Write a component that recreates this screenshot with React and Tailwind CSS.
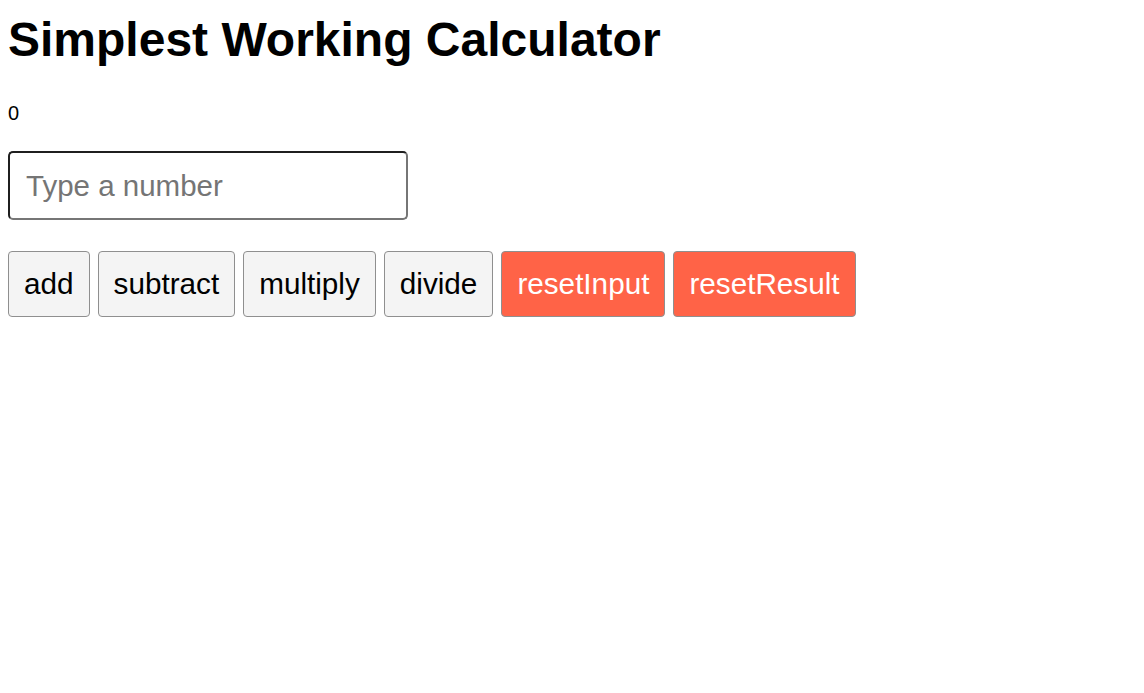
import { useState } from "react";

const grayBtn =
  "rounded border border-[#8f8f8f] bg-[#f4f4f4] px-[15px] py-[15px] text-[29.7px] leading-[normal] text-black";
const redBtn =
  "rounded border border-[#8f8f8f] bg-[#ff6347] px-[15px] py-[15px] text-[29.7px] leading-[normal] text-white";

export default function App() {
  const [value, setValue] = useState("");
  const [result, setResult] = useState(0);

  const num = () => Number(value) || 0;

  return (
    <div className="min-h-screen bg-white p-2 font-['Liberation_Sans',Arial,sans-serif] text-black">
      <h1 className="mt-[4px] text-[48px] font-bold leading-[55px]">Simplest Working Calculator</h1>
      <div className="mt-[35px] text-[20px] leading-[23px]">{result}</div>

      <div className="mt-[26px]">
        <input
          type="number"
          value={value}
          onChange={(e) => setValue(e.target.value)}
          placeholder="Type a number"
          className="w-[400px] rounded-[5px] border-2 border-t-[#1f1f1f] border-l-[#1f1f1f] border-r-[#767676] border-b-[#767676] bg-white px-4 py-[15.5px] text-[29.5px] leading-[normal] text-black outline-none placeholder:text-[#757575]"
        />
      </div>

      <div className="mt-[31px] flex gap-2">
        <button className={grayBtn} onClick={() => setResult((r) => r + num())}>add</button>
        <button className={grayBtn} onClick={() => setResult((r) => r - num())}>subtract</button>
        <button className={grayBtn} onClick={() => setResult((r) => r * num())}>multiply</button>
        <button className={grayBtn} onClick={() => setResult((r) => r / num())}>divide</button>
        <button className={redBtn} onClick={() => setValue("")}>resetInput</button>
        <button className={redBtn} onClick={() => setResult(0)}>resetResult</button>
      </div>
    </div>
  );
}
